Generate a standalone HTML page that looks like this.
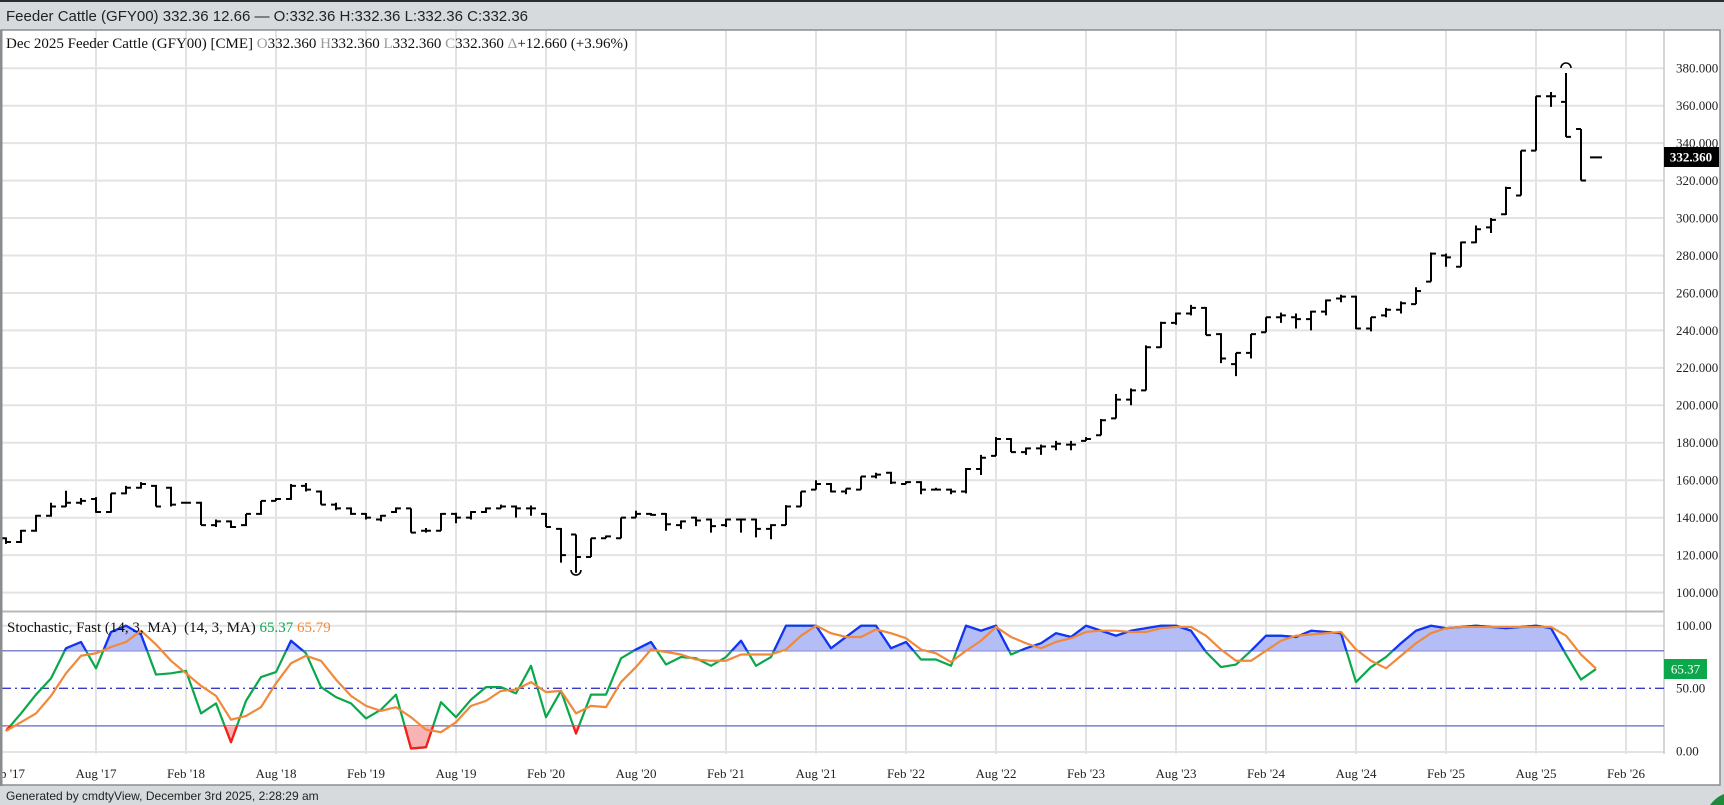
<!DOCTYPE html>
<html><head><meta charset="utf-8"><style>
html,body{margin:0;padding:0;width:1724px;height:805px;overflow:hidden;background:#d7dadd}
svg{position:absolute;left:0;top:0}
.hd{font-family:"Liberation Sans",Arial,sans-serif;font-size:15px;fill:#222}
.sr{font-family:"Liberation Serif","Times New Roman",serif}
</style></head><body>
<svg width="1724" height="805" viewBox="0 0 1724 805" xmlns="http://www.w3.org/2000/svg">
<defs>
<clipPath id="above" clipPathUnits="userSpaceOnUse"><rect x="-2" y="80" width="120" height="40"/></clipPath>
<clipPath id="below" clipPathUnits="userSpaceOnUse"><rect x="-2" y="-20" width="120" height="40"/></clipPath>
<clipPath id="plot"><rect x="2" y="31" width="1662" height="724"/></clipPath>
</defs>
<rect x="0" y="0" width="1724" height="2" fill="#2a2d31"/>
<rect x="0" y="2" width="1724" height="28" fill="#d7dadd"/>
<text class="hd" x="6" y="21">Feeder Cattle (GFY00) 332.36 12.66 — O:332.36 H:332.36 L:332.36 C:332.36</text>
<rect x="1" y="30" width="1719" height="755" fill="#fff" stroke="#8a8d90" stroke-width="1.5"/>
<g stroke="#e3e3e3" stroke-width="2">
<path d="M2 68.2H1664M2 105.7H1664M2 143.1H1664M2 180.6H1664M2 218H1664M2 255.5H1664M2 293H1664M2 330.4H1664M2 367.9H1664M2 405.3H1664M2 442.8H1664M2 480.2H1664M2 517.7H1664M2 555.1H1664M2 592.6H1664"/>
<path d="M2 625.7H1664M2 752H1664"/>
<path d="M96 31V754M186 31V754M276 31V754M366 31V754M456 31V754M546 31V754M636 31V754M726 31V754M816 31V754M906 31V754M996 31V754M1086 31V754M1176 31V754M1266 31V754M1356 31V754M1446 31V754M1536 31V754M1626 31V754"/>
</g>
<path d="M2 611.5H1664" stroke="#b8b8b8" stroke-width="2"/>
<path d="M1664 31V754" stroke="#c8c8c8" stroke-width="1.5"/>
<g clip-path="url(#plot)"><g transform="matrix(15 0 0 -1.873 6 779.9)">
<path vector-effect="non-scaling-stroke" fill="none" stroke="#000" stroke-width="2" d="
M0 126V129.5M-.33 129H0M0 127H.33
M1 126.5V133.5M.67 127H1M1 133H1.33
M2 132.5V141.5M1.67 133H2M2 141H2.33
M3 140.5V148M2.67 141H3M3 146H3.33
M4 145.8V154.4M3.67 146H4M4 148H4.33
M5 147V150.5M4.67 148H5M5 149H5.33
M6 142.6V151M5.67 150H6M6 143H6.33
M7 142.6V153M6.67 143H7M7 153H7.33
M8 152.5V157M7.67 153H8M8 156H8.33
M9 155.5V159M8.67 156H9M9 158H9.33
M10 146V157.5M9.67 157H10M10 146H10.33
M11 146V156.5M10.67 156H11M11 147H11.33
M12 147.5V148.5M11.67 148H12M12 148H12.33
M13 136V148.5M12.67 148H13M13 136H13.33
M14 135V139M13.67 136H14M14 138H14.33
M15 134.5V138.5M14.67 138H15M15 135H15.33
M16 135.5V142M15.67 136H16M16 142H16.33
M17 141.5V149M16.67 142H17M17 149H17.33
M18 149V150.5M17.67 149H18M18 150H18.33
M19 149.5V158M18.67 150H19M19 157H19.33
M20 154V158.5M19.67 157H20M20 155H20.33
M21 147V154.5M20.67 154H21M21 147H21.33
M22 144V148M21.67 147H22M22 145H22.33
M23 141.5V145.5M22.67 145H23M23 142H23.33
M24 139V142.5M23.67 142H24M24 140H24.33
M25 138V141.5M24.67 139H25M25 141H25.33
M26 142.5V145.5M25.67 143H26M26 145H26.33
M27 132V145M26.67 145H27M27 132H27.33
M28 132V134.5M27.67 133H28M28 133H28.33
M29 133V142.5M28.67 133H29M29 142H29.33
M30 137V142.6M29.67 142H30M30 140H30.33
M31 139V143.5M30.67 140H31M31 143H31.33
M32 142.5V145.5M31.67 143H32M32 145H32.33
M33 145V147M32.67 145H33M33 146H33.33
M34 140V146.5M33.67 146H34M34 145H34.33
M35 141V146.5M34.67 145H35M35 145H35.33
M36 135V142.5M35.67 142H36M36 135H36.33
M37 116V134.5M36.67 134H37M37 120H37.33
M38 110.6V131M37.67 131H38M38 119H38.33
M39 119V129M38.67 119H39M39 129H39.33
M40 129V130.5M39.67 129H40M40 130H40.33
M41 129V140M40.67 129H41M41 140H41.33
M42 140V143.7M41.67 140H42M42 142H42.33
M43 141V142.5M42.67 142H43M43 141.5H43.33
M44 133V142.5M43.67 142H44M44 136.5H44.33
M45 134V138.5M44.67 136H45M45 138H45.33
M46 135.5V140.5M45.67 140H46M46 138.5H46.33
M47 132V139.5M46.67 139H47M47 135.5H47.33
M48 135V139.5M47.67 136H48M48 139H48.33
M49 132V139.5M48.67 139H49M49 139H49.33
M50 129.5V139.5M49.67 139H50M50 134H50.33
M51 128.5V136.5M50.67 134H51M51 136H51.33
M52 136V146.7M51.67 136H52M52 146H52.33
M53 146V154M52.67 146H53M53 154H53.33
M54 155V160M53.67 155H54M54 158H54.33
M55 153.5V158.5M54.67 158H55M55 154H55.33
M56 152.5V155.5M55.67 154H56M56 155.5H56.33
M57 155V162M56.67 155H57M57 162H57.33
M58 161V164M57.67 162H58M58 163H58.33
M59 158V164.5M58.67 164H59M59 158.7H59.33
M60 158V159.5M59.67 158H60M60 159H60.33
M61 152.5V159.5M60.67 159H61M61 155H61.33
M62 154.5V156M61.67 155H62M62 155H62.33
M63 152.5V155.5M62.67 155H63M63 154H63.33
M64 153V166.5M63.67 154H64M64 166H64.33
M65 162.8V173.5M64.67 166H65M65 172H65.33
M66 173V183M65.67 173H66M66 182H66.33
M67 175V182.5M66.67 182H67M67 175H67.33
M68 173.5V177.5M67.67 175H68M68 177H68.33
M69 173.5V179M68.67 177H69M69 178H69.33
M70 176V181M69.67 178H70M70 179.5H70.33
M71 176V181M70.67 179H71M71 179H71.33
M72 181V183M71.67 181H72M72 182H72.33
M73 184V192.7M72.67 184H73M73 192H73.33
M74 193V206M73.67 193H74M74 203H74.33
M75 200V209M74.67 203H75M75 208H75.33
M76 208V232M75.67 208H76M76 231H76.33
M77 230.7V244.6M76.67 231H77M77 244H77.33
M78 243V249.5M77.67 244H78M78 249H78.33
M79 248V253.6M78.67 249H79M79 252H79.33
M80 237.5V252.5M79.67 252H80M80 237.5H80.33
M81 222.5V238.5M80.67 238H81M81 225H81.33
M82 215.6V228M81.67 222H82M82 228H82.33
M83 225V238M82.67 228H83M83 238H83.33
M84 239V247M83.67 239H84M84 247H84.33
M85 244V249.5M84.67 247H85M85 248H85.33
M86 241V249M85.67 247H86M86 246H86.33
M87 240V250.5M86.67 246H87M87 250H87.33
M88 248V256.5M87.67 250H88M88 256H88.33
M89 255V259M88.67 257H89M89 258H89.33
M90 240.7V258.5M89.67 258H90M90 241H90.33
M91 239.5V247M90.67 241H91M91 247H91.33
M92 247V252M91.67 248H92M92 251H92.33
M93 249V255.5M92.67 251H93M93 254.5H93.33
M94 254V263M93.67 254H94M94 261H94.33
M95 266V281.6M94.67 266H95M95 281H95.33
M96 274V281M95.67 280H96M96 279H96.33
M97 274V287.4M96.67 274H97M97 287H97.33
M98 286.6V296M97.67 287H98M98 294H98.33
M99 292V300M98.67 295H99M99 299H99.33
M100 301.6V316.7M99.67 302H100M100 316H100.33
M101 312V336M100.67 312H101M101 336H101.33
M102 336V365M101.67 336H102M102 365H102.33
M103 359.3V367.3M102.67 365H103M103 365H103.33
M104 343.3V377.4M103.67 362H104M104 343.3H104.33
M105 320V347.5M104.67 347.5H105M105 320H105.33
M105.6 332.36H106.4"/>
</g></g>
<path d="M1561 68A5 5 0 0 1 1571 68" fill="none" stroke="#000" stroke-width="1.6"/>
<path d="M571 570A5 5 0 0 0 581 570" fill="none" stroke="#000" stroke-width="1.6"/>
<path d="M2 650.7H1664M2 725.9H1664" stroke="#7e80c8" stroke-width="1.5"/>
<path d="M2 688.3H1664" stroke="#3a3ac8" stroke-width="1.3" stroke-dasharray="9 4 2 4"/>
<g transform="matrix(15 0 0 -1.253 6 751)">
<polygon clip-path="url(#above)" fill="#b4bdf6" points="0,80 0,16 1,30 2,45 3,58 4,82 5,87 6,66 7,95 8,100 9,93 10,61 11,62 12,64 13,30 14,38 15,7 16,40 17,59 18,63 19,88 20,78 21,51 22,43 23,38 24,26 25,33 26,45 27,2 28,3 29,39 30,27 31,41 32,51 33,51 34,46 35,68 36,27 37,48 38,14 39,45 40,45 41,74 42,81 43,87 44,69 45,75 46,74 47,68 48,75 49,88 50,68 51,75 52,100 53,100 54,100 55,82 56,91 57,100 58,100 59,82 60,87 61,73 62,73 63,68 64,100 65,96 66,100 67,77 68,82 69,86 70,94 71,91 72,100 73,96 74,92 75,96 76,98 77,100 78,100 79,96 80,79 81,67 82,69 83,80 84,92 85,92 86,91 87,96 88,95 89,94 90,55 91,67 92,75 93,86 94,96 95,100 96,98 97,99 98,100 99,99 100,98 101,99 102,100 103,98 104,77 105,57 106,65.4 106,80"/>
<polygon clip-path="url(#below)" fill="#f8b4b4" points="0,20 0,16 1,30 2,45 3,58 4,82 5,87 6,66 7,95 8,100 9,93 10,61 11,62 12,64 13,30 14,38 15,7 16,40 17,59 18,63 19,88 20,78 21,51 22,43 23,38 24,26 25,33 26,45 27,2 28,3 29,39 30,27 31,41 32,51 33,51 34,46 35,68 36,27 37,48 38,14 39,45 40,45 41,74 41,20"/>
<g fill="none" stroke-width="2.2" stroke-linejoin="round">
<polyline vector-effect="non-scaling-stroke" stroke="#0aa84a" points="0,16 1,30 2,45 3,58 4,82 5,87 6,66 7,95 8,100 9,93 10,61 11,62 12,64 13,30 14,38 15,7 16,40 17,59 18,63 19,88 20,78 21,51 22,43 23,38 24,26 25,33 26,45 27,2 28,3 29,39 30,27 31,41 32,51 33,51 34,46 35,68 36,27 37,48 38,14 39,45 40,45 41,74 42,81 43,87 44,69 45,75 46,74 47,68 48,75 49,88 50,68 51,75 52,100 53,100 54,100 55,82 56,91 57,100 58,100 59,82 60,87 61,73 62,73 63,68 64,100 65,96 66,100 67,77 68,82 69,86 70,94 71,91 72,100 73,96 74,92 75,96 76,98 77,100 78,100 79,96 80,79 81,67 82,69 83,80 84,92 85,92 86,91 87,96 88,95 89,94 90,55 91,67 92,75 93,86 94,96 95,100 96,98 97,99 98,100 99,99 100,98 101,99 102,100 103,98 104,77 105,57 106,65.4"/>
<polyline clip-path="url(#above)" vector-effect="non-scaling-stroke" stroke="#1530ff" points="0,16 1,30 2,45 3,58 4,82 5,87 6,66 7,95 8,100 9,93 10,61 11,62 12,64 13,30 14,38 15,7 16,40 17,59 18,63 19,88 20,78 21,51 22,43 23,38 24,26 25,33 26,45 27,2 28,3 29,39 30,27 31,41 32,51 33,51 34,46 35,68 36,27 37,48 38,14 39,45 40,45 41,74 42,81 43,87 44,69 45,75 46,74 47,68 48,75 49,88 50,68 51,75 52,100 53,100 54,100 55,82 56,91 57,100 58,100 59,82 60,87 61,73 62,73 63,68 64,100 65,96 66,100 67,77 68,82 69,86 70,94 71,91 72,100 73,96 74,92 75,96 76,98 77,100 78,100 79,96 80,79 81,67 82,69 83,80 84,92 85,92 86,91 87,96 88,95 89,94 90,55 91,67 92,75 93,86 94,96 95,100 96,98 97,99 98,100 99,99 100,98 101,99 102,100 103,98 104,77 105,57 106,65.4"/>
<polyline clip-path="url(#below)" vector-effect="non-scaling-stroke" stroke="#ff1a1a" points="0,16 1,30 2,45 3,58 4,82 5,87 6,66 7,95 8,100 9,93 10,61 11,62 12,64 13,30 14,38 15,7 16,40 17,59 18,63 19,88 20,78 21,51 22,43 23,38 24,26 25,33 26,45 27,2 28,3 29,39 30,27 31,41 32,51 33,51 34,46 35,68 36,27 37,48 38,14 39,45 40,45 41,74"/>
<polyline vector-effect="non-scaling-stroke" stroke="#f0893a" points="0,16 1,23 2,30 3,44 4,62 5,76 6,78 7,83 8,87 9,96 10,85 11,72 12,62 13,52 14,44 15,25 16,28 17,35 18,54 19,70 20,76 21,72 22,57 23,44 24,36 25,32 26,35 27,27 28,17 29,15 30,23 31,36 32,40 33,48 34,49 35,55 36,47 37,48 38,30 39,36 40,35 41,55 42,67 43,81 44,79 45,77 46,73 47,72 48,72 49,77 50,77 51,77 52,81 53,92 54,100 55,94 56,91 57,91 58,97 59,94 60,90 61,81 62,78 63,71 64,80 65,88 66,99 67,91 68,86 69,82 70,87 71,90 72,95 73,96 74,96 75,95 76,95 77,98 78,99 79,99 80,92 81,81 82,72 83,72 84,80 85,88 86,92 87,93 88,94 89,95 90,81 91,72 92,66 93,76 94,86 95,94 96,98 97,99 98,99 99,99 100,99 101,99 102,99 103,99 104,92 105,77 106,65.8"/>
</g></g>
<text class="sr" x="6" y="48" font-size="15" fill="#111">Dec 2025 Feeder Cattle (GFY00) [CME] <tspan fill="#999">O</tspan>332.360 <tspan fill="#999">H</tspan>332.360 <tspan fill="#999">L</tspan>332.360 <tspan fill="#999">C</tspan>332.360 <tspan fill="#999">Δ</tspan>+12.660 (+3.96%)</text>
<text class="sr" x="7" y="632" font-size="15" fill="#111" xml:space="preserve">Stochastic, Fast (14, 3, MA)  (14, 3, MA) <tspan fill="#0aa84a">65.37</tspan> <tspan fill="#f0893a">65.79</tspan></text>
<g class="sr" font-size="13" fill="#222">
<text x="1676" y="72.5">380.000</text><text x="1676" y="110">360.000</text><text x="1676" y="147.5">340.000</text><text x="1676" y="185">320.000</text><text x="1676" y="222.5">300.000</text><text x="1676" y="260">280.000</text><text x="1676" y="297.5">260.000</text><text x="1676" y="335">240.000</text><text x="1676" y="372">220.000</text><text x="1676" y="409.5">200.000</text><text x="1676" y="447">180.000</text><text x="1676" y="484.5">160.000</text><text x="1676" y="522">140.000</text><text x="1676" y="559.5">120.000</text><text x="1676" y="597">100.000</text>
<text x="1676" y="630">100.00</text><text x="1676" y="692.5">50.00</text><text x="1676" y="755.5">0.00</text>
</g>
<rect x="1664" y="147" width="55" height="20" fill="#000"/>
<text class="sr" x="1691" y="161.5" font-size="13" font-weight="bold" fill="#fff" text-anchor="middle">332.360</text>
<rect x="1664" y="659" width="43" height="20" fill="#0aa84a"/>
<text class="sr" x="1685.5" y="673.5" font-size="13" fill="#fff" text-anchor="middle">65.37</text>
<g class="sr" font-size="13" fill="#222" text-anchor="middle">
<text x="6" y="778">Feb '17</text><text x="96" y="778">Aug '17</text><text x="186" y="778">Feb '18</text><text x="276" y="778">Aug '18</text><text x="366" y="778">Feb '19</text><text x="456" y="778">Aug '19</text><text x="546" y="778">Feb '20</text><text x="636" y="778">Aug '20</text><text x="726" y="778">Feb '21</text><text x="816" y="778">Aug '21</text><text x="906" y="778">Feb '22</text><text x="996" y="778">Aug '22</text><text x="1086" y="778">Feb '23</text><text x="1176" y="778">Aug '23</text><text x="1266" y="778">Feb '24</text><text x="1356" y="778">Aug '24</text><text x="1446" y="778">Feb '25</text><text x="1536" y="778">Aug '25</text><text x="1626" y="778">Feb '26</text>
</g>
<rect x="0" y="30" width="2.5" height="756" fill="#8a8d90"/>
<rect x="0" y="786" width="1724" height="19" fill="#d7dadd"/>
<text x="6" y="800" font-family="Liberation Sans, Arial, sans-serif" font-size="12" fill="#222">Generated by cmdtyView, December 3rd 2025, 2:28:29 am</text>
<path d="M1710 805Q1716 797 1724 794V805Z" fill="#1f8a3a"/>
</svg>
</body></html>
